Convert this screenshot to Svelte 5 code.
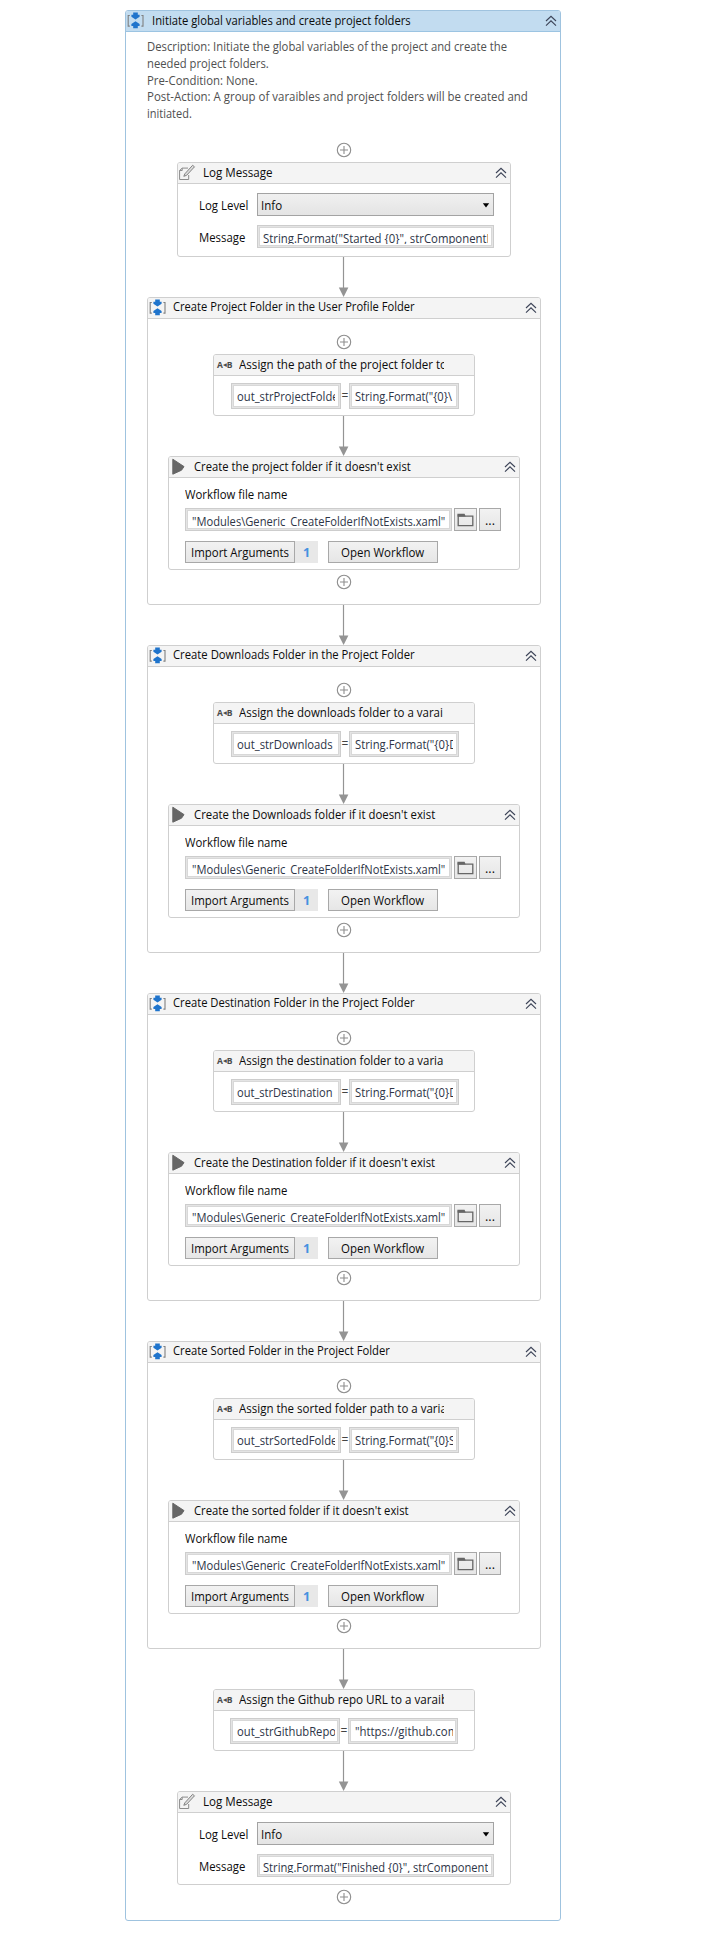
<script>
  const groups = [
    {
      title: 'Create Project Folder in the User Profile Folder', titleW: 242,
      assign: 'Assign the path of the project folder to', assignW: 208,
      to: 'out_strProjectFolder', toW: 106, value: 'String.Format("{0}\\', valueW: 97,
      invoke: "Create the project folder if it doesn't exist", invokeW: 217
    },
    {
      title: 'Create Downloads Folder in the Project Folder', titleW: 242,
      assign: 'Assign the downloads folder to a varai', assignW: 203.5,
      to: 'out_strDownloads', toW: 96, value: 'String.Format("{0}D', valueW: 102,
      invoke: "Create the Downloads folder if it doesn't exist", invokeW: 241
    },
    {
      title: 'Create Destination Folder in the Project Folder', titleW: 242,
      assign: 'Assign the destination folder to a varia', assignW: 204,
      to: 'out_strDestination', toW: 96, value: 'String.Format("{0}D', valueW: 102,
      invoke: "Create the Destination folder if it doesn't exist", invokeW: 241
    },
    {
      title: 'Create Sorted Folder in the Project Folder', titleW: 217,
      assign: 'Assign the sorted folder path to a varia', assignW: 207.5,
      to: 'out_strSortedFolder', toW: 105, value: 'String.Format("{0}S', valueW: 100,
      invoke: "Create the sorted folder if it doesn't exist", invokeW: 215
    }
  ];

  const description = [
    ['Description: Initiate the global variables of the project and create the', 360],
    ['needed project folders.', 121.5],
    ['Pre-Condition: None.', 111],
    ['Post-Action: A group of varaibles and project folders will be created and', 381],
    ['initiated.', 44.5]
  ];

  // Condenses a run of text horizontally to the given width.
  function fit(node, width) {
    node.style.transform = `scaleX(${width / node.offsetWidth})`;
  }
</script>

{#snippet txt(s, w)}<span class="t" use:fit={w}>{s}</span>{/snippet}

{#snippet chevrons()}
  <svg class="chev" width="12" height="12" viewBox="0 0 12 12"><path d="M1 6 6 1.3 11 6M1 10.6 6 5.9 11 10.6" /></svg>
{/snippet}

{#snippet plus()}
  <svg class="plus" width="16" height="16" viewBox="0 0 16 16"><circle cx="8" cy="8" r="6.7" /><path d="M8 4v8M4 8h8" /></svg>
{/snippet}

{#snippet arrow(h)}
  <svg class="arrow" width="12" height={h} viewBox="0 0 12 {h}"><path class="line" d="M5.5 0V{h - 8}" /><path class="head" d="M.8 {h - 9.6}h9.6L5.6 {h}z" /></svg>
{/snippet}

{#snippet seqIcon()}
  <svg class="ico" width="20" height="20" viewBox="0 0 20 20">
    <path class="br" d="M3.8 4.5H2.2v10.6h1.6M15.4 4.5H17v10.6h-1.6" />
    <path class="bl" d="M7.2 1.5h4.6v2.2h1.8v2L9.5 8.6 5.4 5.7v-2h1.8zM7.2 17.3h4.6v-2.2h1.8v-2L9.5 10.2l-4.1 2.9v2h1.8z" />
  </svg>
{/snippet}

{#snippet logIcon()}
  <svg class="ico" width="20" height="20" viewBox="0 0 20 20">
    <path class="doc" d="M10 5.1H4.2L1.6 7.5v9H10.7V12" /><path class="doc" d="M4.2 5.1v2.4H1.6" />
    <path class="pen" d="M5.8 13.3 6.8 10.9 14.6 2.3 16.5 3.8 8.6 12.3z" />
  </svg>
{/snippet}

{#snippet log(msg, w, last)}
  <section class="card log" class:last>
    <header>{@render logIcon()}<div class="title">{@render txt('Log Message', 70)}</div>{@render chevrons()}</header>
    <div class="form">
      <div class="row">
        <label>{@render txt('Log Level', 49)}</label>
        <div class="combo">{@render txt('Info', 21)}<svg width="8" height="5" viewBox="0 0 8 5"><path d="M.8.3h6.4L4 4.4z" /></svg></div>
      </div>
      <div class="row">
        <label>{@render txt('Message', 46)}</label>
        <div class="field msg"><div class="clip">{@render txt(msg, w)}</div></div>
      </div>
    </div>
  </section>
{/snippet}

{#snippet assign(title, w, to, toW, value, valueW, shifted)}
  <section class="card assign">
    <header><span class="ab">A<i>◂</i>B</span><div class="title">{@render txt(title, w)}</div></header>
    <div class="pair" class:shifted>
      <div class="field"><div class="clip">{@render txt(to, toW)}</div></div>
      <span class="eq">=</span>
      <div class="field"><div class="clip">{@render txt(value, valueW)}</div></div>
    </div>
  </section>
{/snippet}

<main>
  <section class="card root">
    <header>{@render seqIcon()}<div class="title">{@render txt('Initiate global variables and create project folders', 259)}</div>{@render chevrons()}</header>
    <div class="desc">
      {#each description as [line, w]}<p>{@render txt(line, w)}</p>{/each}
    </div>
    <div class="flow">
      {@render plus()}
      <div class="gap4"></div>
      {@render log('String.Format("Started {0}", strComponentName', 255, false)}
      {@render arrow(40)}
      {#each groups as g}
        <section class="card seq">
          <header>{@render seqIcon()}<div class="title">{@render txt(g.title, g.titleW)}</div>{@render chevrons()}</header>
          <div class="body">
            {@render plus()}
            <div class="gap4"></div>
            {@render assign(g.assign, g.assignW, g.to, g.toW, g.value, g.valueW, false)}
            {@render arrow(40)}
            <section class="card invoke">
              <header><svg class="play" width="14" height="18" viewBox="0 0 14 18"><path d="M.8 1.2 12 8.6 9.5 12.2.8 16.2z" /></svg><div class="title">{@render txt(g.invoke, g.invokeW)}</div>{@render chevrons()}</header>
              <div class="inner">
                <div class="cap">{@render txt('Workflow file name', 102)}</div>
                <div class="file">
                  <div class="field path"><div class="clip">{@render txt('"Modules\\Generic_CreateFolderIfNotExists.xaml"', 253)}</div></div>
                  <button class="folder" aria-label="Browse"><svg width="17" height="14" viewBox="0 0 17 14"><path class="o" d="M1.2 3.2h14.6v9.4H1.2z" /><path class="tab" d="M.4.7h7.2l1 2.8H.4z" /></svg></button>
                  <button class="dots">...</button>
                </div>
                <div class="acts">
                  <button class="b">{@render txt('Import Arguments', 98)}</button><span class="count">1</span>
                  <button class="b open">{@render txt('Open Workflow', 83)}</button>
                </div>
              </div>
            </section>
            <div class="gap4"></div>
            {@render plus()}
          </div>
        </section>
        {@render arrow(40)}
      {/each}
      {@render assign('Assign the Github repo URL to a varaible', 219, 'out_strGithubRepo', 99, '"https://github.com', 103, true)}
      {@render arrow(40)}
      {@render log('String.Format("Finished {0}", strComponentName', 257, true)}
      <div class="gap4"></div>
      {@render plus()}
    </div>
  </section>
</main>

<style>
  :global(body) { background: #fff; }
  main {
    box-sizing: border-box; width: 717px; height: 1946px; padding: 10px 0 0 125px;
    font: 12.6px/16.75px "Open Sans", "Noto Sans", sans-serif; color: #0c0c0c;
  }
  main :global(*) { box-sizing: border-box; }
  svg { display: block; flex: none; }
  .t { display: inline-block; flex: none; white-space: pre; transform-origin: 0 50%; }
  .card { display: flex; flex-direction: column; align-items: center; background: #fff; border: 1px solid #cfcfcf; border-radius: 3px; }
  header { display: flex; align-items: center; align-self: stretch; flex: none; height: 21px; background: #f4f4f4; border-bottom: 1px solid #cfcfcf; border-radius: 2px 2px 0 0; }
  .title { flex: 1; min-width: 0; height: 20px; line-height: 19.5px; overflow: hidden; white-space: nowrap; }
  .chev { margin-right: 3px; fill: none; stroke: #3d4458; stroke-width: 1.15; }
  .root { width: 436px; height: 1911px; border-color: #9fc3df; }
  .root > header { background: #c2dcf0; border-color: #9cc4e2; }
  .root > header .title, .seq > header .title { padding-left: 5px; }
  .desc { align-self: stretch; flex: none; height: 110px; padding: 7px 0 0 21px; color: #505050; }
  p { height: 16.75px; margin: 0; line-height: 16.75px; white-space: nowrap; }
  .flow { display: flex; flex-direction: column; align-items: center; align-self: stretch; padding-left: 2px; }
  .gap4 { flex: none; height: 4px; }
  .plus { fill: none; stroke: #8e8e8e; stroke-width: 1.1; }
  .arrow { fill: #949494; }
  .arrow .line { stroke: #949494; stroke-width: 1.2; }
  .br { fill: none; stroke: #808080; stroke-width: 1.1; }
  .bl { fill: #1f74cc; }
  .doc { fill: none; stroke: #8b8b8b; }
  .pen { fill: #ddd; stroke: #777; stroke-width: .9; }
  .root > header .title { padding-left: 6px; }

  .log { flex: none; width: 334px; height: 95px; }
  .log.last { height: 94px; }
  .log .title { padding-left: 5px; }
  .form { display: flex; flex-direction: column; gap: 9px; align-self: stretch; padding: 9px 0 0 21px; }
  .row { display: flex; align-items: center; height: 23px; }
  label { display: flex; width: 58px; padding-top: 3px; }
  .combo { display: flex; align-items: center; justify-content: space-between; width: 237px; height: 23px; padding: 4px 3px 0 3px; background: linear-gradient(#f0f0f0, #e4e4e4); border: 1px solid #a3a3a3; }
  .combo svg { fill: #000; margin-bottom: 3px; }
  .field { flex: none; padding: 1px; background: #fff; border: 1px solid #cdcdcd; box-shadow: inset 0 0 0 1px #e4e4e4, inset 0 0 0 2px #d8d8d8; color: #2e3547; }
  .clip { overflow: hidden; white-space: nowrap; }
  .msg { width: 237px; height: 23px; padding: 4px 5px 0; }
  .msg .clip { height: 14px; line-height: 18px; }

  .assign { flex: none; width: 262px; height: 62px; }
  .ab { display: flex; align-items: center; width: 24px; padding-left: 3px; font: bold 8.5px/12px "Open Sans", sans-serif; letter-spacing: -.2px; color: #4a4a4a; }
  .ab i { font: 7.5px/8px "DejaVu Sans", sans-serif; width: 4px; text-align: center; }
  .assign .title { flex: 0 0 205.5px; padding-left: .5px; }
  .pair { display: flex; align-items: center; padding: 7px 0 0 2px; }
  .pair.shifted { padding-left: 0; }
  .pair .field { width: 110px; height: 26px; padding: 4px 5px; }
  .pair.shifted .field { padding: 4px 4px 4px 6px; }
  .pair .clip { height: 16px; line-height: 17.5px; }
  .eq { width: 8px; text-align: center; color: #444; font-size: 12px; }

  .seq { flex: none; width: 394px; height: 308px; }
  .seq > header .title { line-height: 18px; }
  .body { display: flex; flex-direction: column; align-items: center; padding-top: 15px; }
  .invoke { flex: none; width: 352px; height: 114px; }
  .play { margin-left: 3px; fill: #666; stroke: #666; }
  .invoke .title { padding-left: 7.5px; }
  .inner { align-self: stretch; padding: 8px 0 0 16px; }
  .cap { display: flex; height: 22px; line-height: 18px; }
  .file { display: flex; }
  .path { width: 267px; height: 23px; padding: 4px 6px 0; }
  .path .clip { height: 14px; line-height: 18px; }
  button { padding: 0; margin: 0; font: inherit; color: inherit; background: linear-gradient(#f2f2f2, #e6e6e6); border: 1px solid #a8a8a8; border-radius: 0; }
  .folder { display: grid; place-items: center; width: 23px; height: 23px; margin-left: 2px; }
  .folder .o { fill: none; stroke: #666; stroke-width: 1.3; }
  .folder .tab { fill: #666; }
  .dots { width: 22px; height: 23px; margin-left: 2px; padding-top: 3px; }
  .acts { display: flex; padding-top: 10px; }
  .b { display: flex; align-items: center; width: 110px; height: 22px; padding: 2px 0 0 5px; line-height: 18px; }
  .open { margin-left: 10px; padding-left: 12px; }
  .count { width: 23px; height: 22px; background: #e8e8e8; color: #4690e0; font-weight: 700; line-height: 24px; text-align: center; }
</style>
